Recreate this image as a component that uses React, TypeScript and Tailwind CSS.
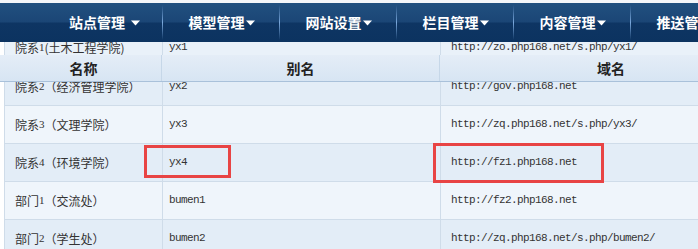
import React from 'react';

const cjk = { fontFamily: '"Noto Sans CJK SC", "Noto Sans", sans-serif' };
const mono = { fontFamily: '"Liberation Mono", "Courier New", monospace' };
const digit = { fontFamily: '"Liberation Serif", serif' };

const menus = ['站点管理 ', '模型管理', '网站设置', '栏目管理', '内容管理', '推送管理'];

interface Row {
  pre: string;
  num: string;
  post: string;
  alias: string;
  domain: string;
  dark: boolean;
}

const rows: Row[] = [
  { pre: '院系', num: '2', post: '（经济管理学院）', alias: 'yx2', domain: 'http://gov.php168.net', dark: true },
  { pre: '院系', num: '3', post: '（文理学院）', alias: 'yx3', domain: 'http://zq.php168.net/s.php/yx3/', dark: false },
  { pre: '院系', num: '4', post: '（环境学院）', alias: 'yx4', domain: 'http://fz1.php168.net', dark: true },
  { pre: '部门', num: '1', post: '（交流处）', alias: 'bumen1', domain: 'http://fz2.php168.net', dark: false },
  { pre: '部门', num: '2', post: '（学生处）', alias: 'bumen2', domain: 'http://zq.php168.net/s.php/bumen2/', dark: true },
];

function Caret() {
  return (
    <svg width="9" height="6" viewBox="0 0 9 6" className="ml-[1px] inline-block shrink-0">
      <path d="M0 0.5h9L4.5 5.5z" fill="#ffffff" />
    </svg>
  );
}

function TableRow({ row }: { row: Row }) {
  return (
    <div
      className={`flex h-[38px] shrink-0 items-center border-b border-[#cfdce9] ${
        row.dark ? 'bg-[#e3edf7]' : 'bg-[#eff5fb]'
      }`}
    >
      <div className="flex h-full w-[158px] shrink-0 items-center border-r border-[#cfdce9] pl-[10px] text-[12px] whitespace-nowrap text-[#333]" style={cjk}>
        {row.pre}
        <span className="text-[11px]" style={digit}>{row.num}</span>
        {row.post}
      </div>
      <div className="flex h-full w-[278px] shrink-0 items-center border-r border-[#cfdce9] pl-[6px] text-[11px] tracking-[-0.6px] text-[#333]" style={mono}>
        {row.alias}
      </div>
      <div className="flex h-full w-[342px] shrink-0 items-center pl-[10px] text-[11px] tracking-[-0.6px] text-[#333]" style={mono}>
        {row.domain}
      </div>
    </div>
  );
}

export default function App() {
  return (
    <div className="relative h-[249px] w-[698px] overflow-hidden bg-white">
      <div className="flex flex-col">
        <div className="h-[3px] bg-[#f4f6f9]" />

        {/* top menu */}
        <div className="flex h-[39px] bg-[linear-gradient(#21507f_0%,#1b4676_48%,#0e3563_52%,#0c3360_100%)]" style={cjk}>
          <div className="w-[46px] shrink-0" />
          {menus.map((m) => (
            <div key={m} className="relative flex w-[117px] shrink-0 items-center justify-center whitespace-nowrap text-[14px] font-bold text-white">
              {m.trim()}
              {m.endsWith(' ') && <span className="w-[5px]" />}
              <Caret />
              <span className="absolute right-0 top-[2px] h-[35px] w-px bg-[linear-gradient(rgba(120,165,215,0),#7aa8dc_50%,rgba(120,165,215,0))]" />
            </div>
          ))}
        </div>

        {/* row scrolled under the menu */}
        <div className="ml-[4px] flex h-[13px] overflow-hidden border-l border-[#cfdce9] bg-[#e9f1f9]">
          <div className="flex h-full w-[158px] shrink-0 items-end border-r border-[#cfdce9] pl-[10px] text-[12px] leading-[15px] whitespace-nowrap text-[#333]" style={cjk}>
            院系<span className="text-[11px]" style={digit}>1</span>(土木工程学院)
          </div>
          <div className="flex h-full w-[278px] shrink-0 items-end border-r border-[#cfdce9] pl-[6px] text-[11px] leading-[15px] tracking-[-0.6px] text-[#333]" style={mono}>
            yx1
          </div>
          <div className="flex h-full w-[342px] shrink-0 items-end pl-[10px] text-[11px] leading-[15px] tracking-[-0.6px] text-[#333]" style={mono}>
            http://zo.php168.net/s.php/yx1/
          </div>
        </div>

        {/* column header */}
        <div className="flex h-[27px] border-b border-[#a9c1da] bg-[linear-gradient(#e4edf7,#d7e5f3)] text-[14px] font-bold text-[#222]" style={cjk}>
          <div className="flex w-[162px] shrink-0 items-center justify-center border-r border-[#c6d7e8] pl-[6px]">名称</div>
          <div className="flex w-[278px] shrink-0 items-center justify-center border-r border-[#c6d7e8]">别名</div>
          <div className="flex w-[342px] shrink-0 items-center justify-center">域名</div>
        </div>

        {/* rows */}
        <div className="ml-[4px] border-l border-[#cfdce9]">
          <div className="flex h-[24px] flex-col justify-end overflow-hidden">
            <TableRow row={rows[0]} />
          </div>
          {rows.slice(1).map((r) => (
            <TableRow key={r.alias} row={r} />
          ))}
        </div>
      </div>

      {/* highlight boxes */}
      <div className="absolute left-[144px] top-[145px] h-[33px] w-[87px] border-[3px] border-[#e84444]" />
      <div className="absolute left-[433px] top-[143px] h-[40px] w-[171px] border-[3px] border-[#e84444]" />
    </div>
  );
}
